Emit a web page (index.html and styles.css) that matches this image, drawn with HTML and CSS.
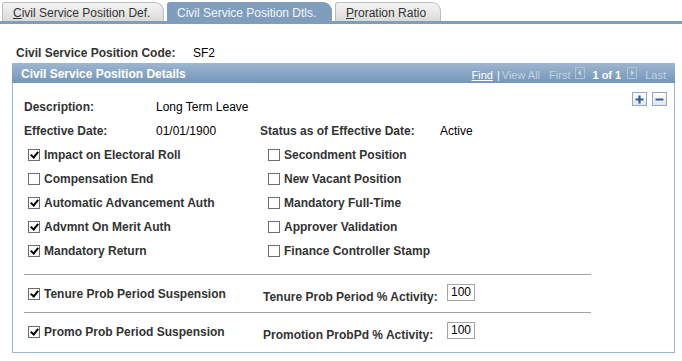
FILE: index.html
```html
<!DOCTYPE html>
<html lang="en">
<head>
  <meta charset="UTF-8">
  <title>Civil Service Position Dtls.</title>
  <link rel="stylesheet" href="styles.css">
</head>
<body>

  <div class="tabs">
    <div class="tab tab-def"><u>C</u>ivil Service Position Def.</div>
    <div class="tab tab-dtls active">Civil Service Position Dtls.</div>
    <div class="tab tab-ratio"><u>P</u>roration Ratio</div>
  </div>

  <div class="key-row">
    <span class="key-label">Civil Service Position Code:</span>
    <span class="key-value">SF2</span>
  </div>

  <div class="group">
    <div class="group-head">
      <span class="group-title">Civil Service Position Details</span>
      <span class="nav">
        <a class="nav-find">Find</a>
        <span class="nav-pipe">|</span>
        <span class="nav-dim">View All</span>
        <span class="nav-dim nav-first">First</span>
        <span class="nav-arrow">
          <svg width="10" height="12" viewBox="0 0 10 12"><path d="M6 3 L3 6 L6 9 Z" fill="#c7d5e5"/></svg>
        </span>
        <span class="nav-count">1 of 1</span>
        <span class="nav-arrow">
          <svg width="10" height="12" viewBox="0 0 10 12"><path d="M4 3 L7 6 L4 9 Z" fill="#c7d5e5"/></svg>
        </span>
        <span class="nav-dim">Last</span>
      </span>
    </div>

    <div class="group-body">
      <div class="row">
        <span class="lbl">Description:</span>
        <span class="val">Long Term Leave</span>
        <span class="row-buttons">
          <span class="btn-icon">
            <svg width="11" height="11" viewBox="0 0 11 11"><path d="M5.5 1.5 V9.5 M1.5 5.5 H9.5" stroke="#2f5f95" stroke-width="2.2"/></svg>
          </span>
          <span class="btn-icon">
            <svg width="11" height="11" viewBox="0 0 11 11"><path d="M1.5 5.5 H9.5" stroke="#2f5f95" stroke-width="2"/></svg>
          </span>
        </span>
      </div>
      <div class="row">
        <span class="lbl">Effective Date:</span>
        <span class="val">01/01/1900</span>
        <span class="lbl status-lbl">Status as of Effective Date:</span>
        <span class="val">Active</span>
      </div>

      <div class="row check-row">
        <label class="check check-left"><span class="cb on"></span>Impact on Electoral Roll</label>
        <label class="check"><span class="cb"></span>Secondment Position</label>
      </div>
      <div class="row check-row">
        <label class="check check-left"><span class="cb"></span>Compensation End</label>
        <label class="check"><span class="cb"></span>New Vacant Position</label>
      </div>
      <div class="row check-row">
        <label class="check check-left"><span class="cb on"></span>Automatic Advancement Auth</label>
        <label class="check"><span class="cb"></span>Mandatory Full-Time</label>
      </div>
      <div class="row check-row">
        <label class="check check-left"><span class="cb on"></span>Advmnt On Merit Auth</label>
        <label class="check"><span class="cb"></span>Approver Validation</label>
      </div>
      <div class="row check-row">
        <label class="check check-left"><span class="cb on"></span>Mandatory Return</label>
        <label class="check"><span class="cb"></span>Finance Controller Stamp</label>
      </div>

      <div class="sep"></div>
      <div class="prob-row">
        <label class="check prob-check"><span class="cb on"></span>Tenure Prob Period Suspension</label>
        <span class="prob-lbl">Tenure Prob Period % Activity:</span>
        <span class="num-box">100</span>
      </div>
      <div class="sep sep-mid"></div>
      <div class="prob-row">
        <label class="check prob-check"><span class="cb on"></span>Promo Prob Period Suspension</label>
        <span class="prob-lbl">Promotion ProbPd % Activity:</span>
        <span class="num-box">100</span>
      </div>
    </div>
  </div>

</body>
</html>
```

FILE: styles.css
```css
body {
  margin: 0;
  font-family: "Liberation Sans", Arial, sans-serif;
  font-size: 12px;
  color: #000;
  background: #fff;
}
.tabs {
  display: flex;
  gap: 3px;
  padding: 2px 0 0 2px;
  border-bottom: 3px solid #7f9dbd;
}
.tab {
  height: 19px;
  line-height: 20px;
  box-sizing: border-box;
  padding-left: 10px;
  color: #333;
  font-size: 12px;
  background: linear-gradient(#f4f4f4, #dadada);
  border: 1px solid #bdbdbd;
  border-bottom: none;
  border-radius: 3px 9px 0 0;
}
.tab-def { width: 162px; }
.tab-dtls { width: 165px; padding-left: 9px; }
.tab-ratio { width: 106px; }
.tab.active {
  background: #7f9dbd;
  border-color: #7f9dbd;
  color: #f2f6fa;
}

.key-row {
  display: flex;
  margin: 22px 0 0 16px;
  line-height: 14px;
}
.key-label {
  width: 177px;
  font-weight: bold;
  color: #333;
}

.group {
  margin: 3px 0 0 12px;
  width: 663px;
  height: 290px;
  box-sizing: border-box;
  border: 1px solid #9ab3ce;
  border-top: none;
}
.group-head {
  display: flex;
  align-items: center;
  justify-content: space-between;
  height: 20px;
  padding: 0 9px 0 9px;
  margin: 0 -1px;
  background: linear-gradient(#9db6d1, #7595b8);
}
.group-title {
  color: #fff;
  font-weight: bold;
  font-size: 12px;
  padding-top: 1px;
}
.nav {
  display: flex;
  align-items: center;
  font-size: 11px;
  color: #c3d2e3;
  padding-top: 3px;
}
.nav-find {
  color: #fff;
  text-decoration: underline;
}
.nav-pipe {
  color: #fff;
  margin: 0 2px 0 4px;
}
.nav-first {
  margin: 0 5px 0 9px;
}
.nav-arrow {
  display: inline-flex;
  width: 10px;
  height: 12px;
  box-sizing: border-box;
  border: 1px solid #b0c3d8;
  margin-top: -3px;
}
.nav-arrow svg { margin: -1px; }
.nav-count {
  color: #fff;
  font-weight: bold;
  margin: 0 6px 0 7px;
}
.nav-count + .nav-arrow { margin-right: 8px; }

.group-body {
  padding: 12px 0 0 11px;
}
.row {
  display: flex;
  align-items: center;
  height: 24px;
}
.lbl {
  width: 132px;
  font-weight: bold;
  color: #333;
}
.val {
  width: 104px;
}
.status-lbl {
  width: 180px;
}
.row-buttons {
  display: flex;
  gap: 5px;
  margin-left: auto;
  margin-right: 7px;
  align-self: flex-start;
  margin-top: -3px;
}
.btn-icon {
  display: flex;
  align-items: center;
  justify-content: center;
  width: 15px;
  height: 14px;
  box-sizing: border-box;
  border: 1px solid #9aa7b5;
  background: linear-gradient(#ffffff, #dfe6ee);
}

.check {
  display: flex;
  align-items: center;
  gap: 4px;
  font-weight: bold;
  color: #333;
}
.check-left {
  width: 240px;
  margin-left: 4px;
}
.cb {
  position: relative;
  width: 12px;
  height: 12px;
  box-sizing: border-box;
  border: 1px solid #6d6d6d;
  background: #fff;
}
.cb.on::after {
  content: "";
  position: absolute;
  left: 3px;
  top: 0px;
  width: 3px;
  height: 6px;
  border: solid #000;
  border-width: 0 2px 2px 0;
  transform: rotate(40deg);
}

.sep {
  width: 567px;
  height: 1px;
  background: #a3a3a3;
  margin-top: 11px;
}
.sep-mid {
  margin-top: 0;
}
.prob-row {
  display: flex;
  align-items: center;
  height: 37px;
}
.prob-check {
  width: 235px;
  margin-left: 4px;
}
.prob-lbl {
  width: 184px;
  font-weight: bold;
  color: #333;
  margin-top: 7px;
}
.num-box {
  width: 28px;
  height: 17px;
  line-height: 14px;
  box-sizing: border-box;
  border: 1px solid #a5a5a5;
  text-align: right;
  padding-right: 3px;
  margin-top: -2px;
}
```
